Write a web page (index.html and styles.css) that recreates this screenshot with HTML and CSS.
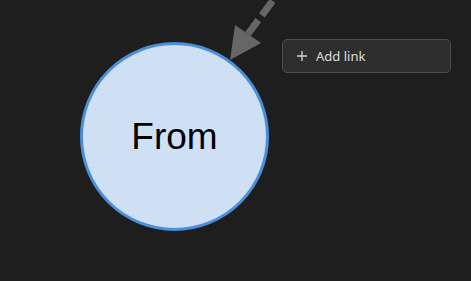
FILE: index.html
```html
<!DOCTYPE html>
<html lang="en">
<head>
    <meta charset="UTF-8">
    <meta name="viewport" content="width=device-width, initial-scale=1.0">
    <title>Graph editor</title>
    <link rel="stylesheet" href="styles.css">
</head>
<body>
    <div class="canvas">
        <svg class="edges" width="471" height="281" viewBox="0 0 471 281">
            <line class="edge" x1="300" y1="-36" x2="248" y2="34" />
            <polygon class="arrow" points="230,60 235,25 261,43" />
        </svg>

        <div class="node">From</div>

        <button class="menu-button">
            <svg class="plus" width="12" height="12" viewBox="0 0 12 12">
                <path d="M6 1v10M1 6h10" />
            </svg>
            <span>Add link</span>
        </button>
    </div>
</body>
</html>
```

FILE: styles.css
```css
body {
    margin: 0;
    background-color: #1e1e1e;
    font-family: "Noto Sans", Arial, sans-serif;
    overflow: hidden;
}
.canvas {
    position: relative;
    width: 471px;
    height: 281px;
}
.edges {
    position: absolute;
    left: 0;
    top: 0;
}
.edge {
    stroke: #666666;
    stroke-width: 7;
    stroke-dasharray: 18 6;
    stroke-dashoffset: 2;
}
.arrow {
    fill: #666666;
}
.node {
    position: absolute;
    left: 80px;
    top: 42px;
    width: 183px;
    height: 183px;
    border: 3px solid #4a8fd8;
    border-radius: 50%;
    background-color: #cfe0f5;
    color: #000000;
    font-family: "Liberation Sans", Arial, sans-serif;
    font-size: 37px;
    display: flex;
    align-items: center;
    justify-content: center;
}
.menu-button {
    position: absolute;
    left: 282px;
    top: 39px;
    width: 169px;
    height: 34px;
    display: flex;
    align-items: center;
    gap: 8px;
    padding: 0 0 0 13px;
    background-color: #2e2e2e;
    border: 1px solid #4d4d4d;
    border-radius: 5px;
    color: #dedede;
    font-family: "Noto Sans", sans-serif;
    font-size: 13px;
    cursor: pointer;
}
.plus path {
    stroke: #d0d0d0;
    stroke-width: 1.4;
    fill: none;
}
```
